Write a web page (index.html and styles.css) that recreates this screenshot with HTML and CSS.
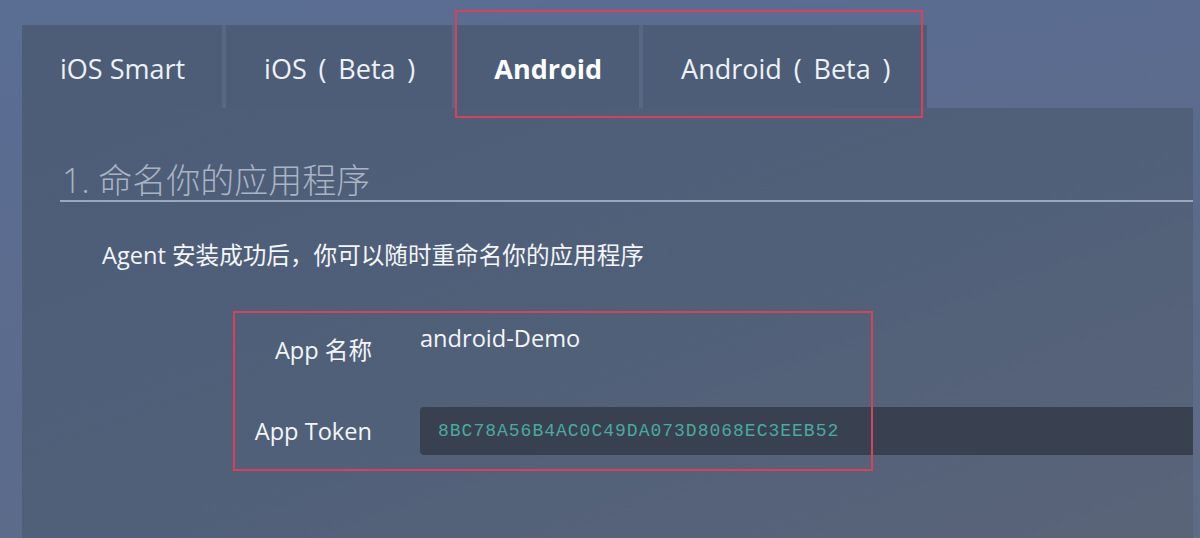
FILE: index.html
```html
<!DOCTYPE html>
<html lang="zh-CN">
<head>
<meta charset="utf-8">
<title>Android</title>
<link rel="stylesheet" href="styles.css">
</head>
<body>
<div class="page">
  <div class="tabs">
    <div class="tab">iOS Smart</div>
    <div class="tab tab-spaced">iOS ( Beta )</div>
    <div class="tab active">Android</div>
    <div class="tab tab-spaced">Android ( Beta )</div>
  </div>
  <div class="panel">
    <h2 class="heading">1. 命名你的应用程序</h2>
    <p class="desc">Agent 安装成功后，你可以随时重命名你的应用程序</p>
    <div class="form">
      <div class="label label-name">App 名称</div>
      <div class="value">android-Demo</div>
      <div class="label label-token">App Token</div>
      <div class="token">8BC78A56B4AC0C49DA073D8068EC3EEB52</div>
    </div>
  </div>
</div>
<div class="mark mark-tabs"></div>
<div class="mark mark-form"></div>
</body>
</html>
```

FILE: styles.css
```css
html, body {
  margin: 0;
  padding: 0;
}
body {
  width: 1200px;
  height: 538px;
  overflow: hidden;
  background: linear-gradient(170deg, #5a6d93 0%, #5b6b8c 60%, #606c86 100%);
  font-family: "Open Sans", "Noto Sans CJK SC", sans-serif;
  color: #eef1f5;
  position: relative;
}
.page {
  padding: 25px 7px 0 22px;
  display: flex;
  flex-direction: column;
  height: 513px;
}
.tabs {
  display: flex;
  gap: 4px;
  align-self: flex-start;
  background: #586884;
  height: 83px;
}
.tab {
  background: #4d5d78;
  padding: 3px 37px 0 38px;
  display: flex;
  align-items: center;
  box-sizing: border-box;
  font-size: 27px;
  color: #eef1f5;
  white-space: nowrap;
}
.tab-spaced {
  word-spacing: 4.8px;
}
.tab.active {
  font-weight: 700;
  color: #ffffff;
}
.panel {
  flex: 1;
  background: linear-gradient(160deg, #4d5d78 0%, #506079 50%, #5a6479 100%);
  padding-top: 52px;
}
.heading {
  margin: 0 0 0 38px;
  padding: 0 0 0 2px;
  font-size: 34px;
  font-weight: 300;
  line-height: 40px;
  color: #a9b3c3;
  border-bottom: 2px solid #9aa8bd;
}
.desc {
  margin: 37px 0 0 80px;
  font-size: 23.6px;
  line-height: 32px;
  color: #f3f5f8;
}
.form {
  margin-top: 51px;
  display: grid;
  grid-template-columns: 350px 1fr;
  grid-template-rows: 85px 48px;
  column-gap: 48px;
}
.label {
  text-align: right;
  font-size: 23.6px;
  line-height: 32px;
  color: #f3f5f8;
}
.label-name {
  padding-top: 12px;
}
.label-token {
  align-self: center;
}
.value {
  font-size: 23.6px;
  line-height: 32px;
  color: #f3f5f8;
}
.token {
  background: #394150;
  border-radius: 4px 0 0 4px;
  display: flex;
  align-items: center;
  padding-left: 18px;
  font-family: "Liberation Mono", monospace;
  font-size: 18px;
  letter-spacing: 1px;
  color: #4aa9a0;
}
.mark {
  position: absolute;
  border: 2px solid #d8405d;
  box-sizing: border-box;
}
.mark-tabs {
  left: 455px;
  top: 10px;
  width: 468px;
  height: 108px;
}
.mark-form {
  left: 233px;
  top: 311px;
  width: 640px;
  height: 160px;
}
```
